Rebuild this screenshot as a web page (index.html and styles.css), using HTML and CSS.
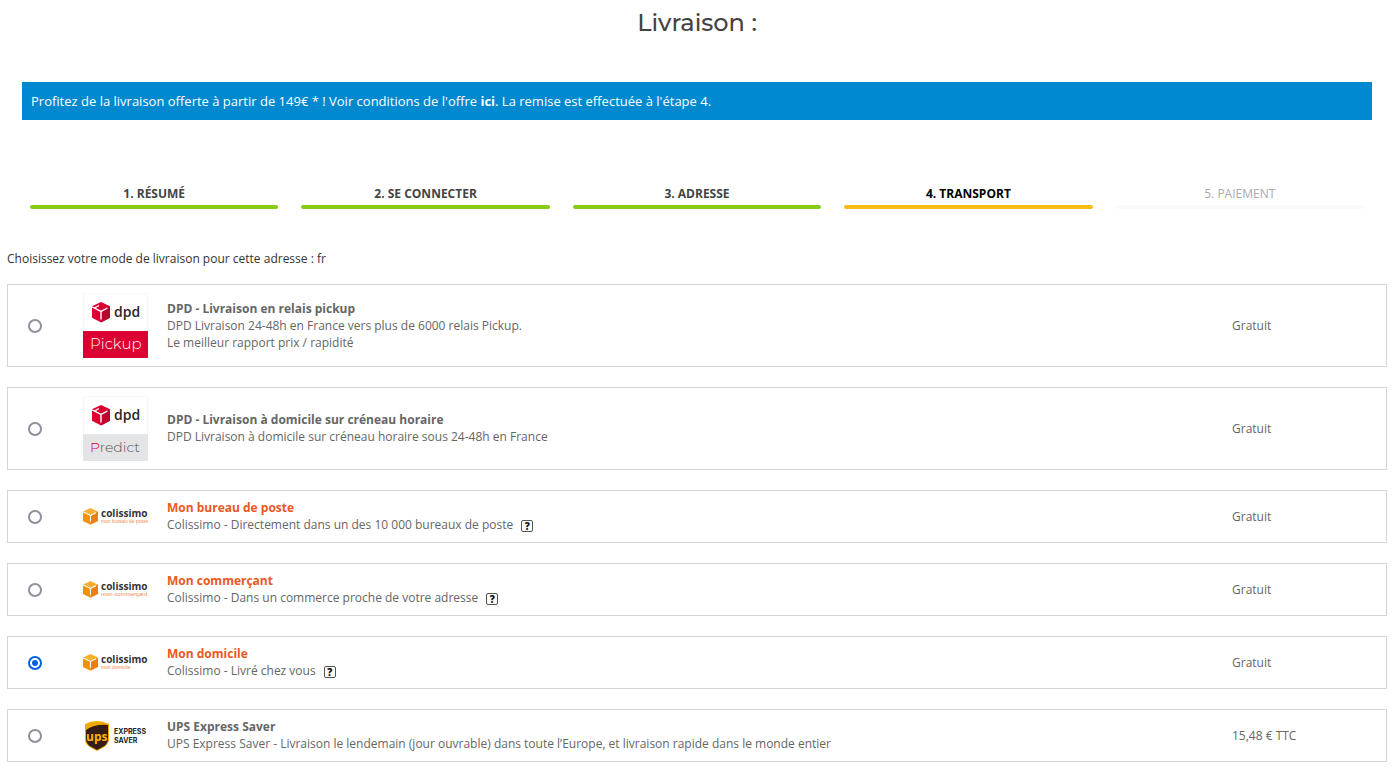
FILE: index.html
```html
<!DOCTYPE html>
<html lang="fr">
<head>
<meta charset="utf-8">
<title>Livraison</title>
<link rel="stylesheet" href="styles.css">
</head>
<body>
<svg class="defs" aria-hidden="true">
  <symbol id="dpd-cube" viewBox="0 0 18 21">
    <path fill="#dc0032" d="M9 0 18 4.200V15.800L9 20.600 0 15.800V4.200z"/>
    <path fill="#b8062c" d="M9.500 9.500 18 5V15.800L9.500 20.300z"/>
    <path fill="none" stroke="#fff" stroke-width="1.400" d="M0 4.800 9 9.400 15.500 6M9 9.400V17.500M2.500 6 7 3.500"/>
  </symbol>
  <symbol id="colissimo-cube" viewBox="0 0 15 17">
    <path fill="#fbb034" d="M7.500 0 15 3.600 7.500 7.200 0 3.600z"/>
    <path fill="#f39200" d="M0 3.600 7.500 7.200V16.800L0 13z"/>
    <path fill="#ee7d11" d="M15 3.600V13L7.500 16.800V7.200z"/>
    <path fill="none" stroke="#fff" stroke-width="1.100" d="M0 3.900 7.500 7.400 13 4.800M7.500 7.400V13.500"/>
  </symbol>
</svg>
<main class="page">
  <h1 class="title">Livraison :</h1>
  <p class="banner">Profitez de la livraison offerte à partir de 149€ * ! Voir conditions de l'offre <a href="#">ici</a>. La remise est effectuée à l'étape 4.</p>
  <ol class="steps">
    <li class="step done">1. Résumé</li>
    <li class="step done">2. Se connecter</li>
    <li class="step done">3. Adresse</li>
    <li class="step current">4. Transport</li>
    <li class="step todo">5. Paiement</li>
  </ol>
  <form class="carriers">
    <p class="intro">Choisissez votre mode de livraison pour cette adresse : fr</p>

    <div class="carrier">
      <input type="radio" name="carrier" id="c1">
      <svg class="logo" width="65" height="65" viewBox="0 0 65 65" aria-hidden="true">
        <rect x=".5" y=".5" width="64" height="64" fill="#fff" stroke="#f8f8f8"/>
        <use href="#dpd-cube" x="9" y="9" width="18" height="21"/>
        <text class="dpd" x="31" y="24">dpd</text>
        <rect y="38" width="65" height="27" fill="#dc0032"/>
        <text class="sub pickup" x="7" y="56">Pickup</text>
      </svg>
      <label class="text" for="c1"><strong>DPD - Livraison en relais pickup</strong><span>DPD Livraison 24-48h en France vers plus de 6000 relais Pickup.</span><span>Le meilleur rapport prix / rapidité</span></label>
      <span class="price">Gratuit</span>
    </div>

    <div class="carrier">
      <input type="radio" name="carrier" id="c2">
      <svg class="logo" width="65" height="65" viewBox="0 0 65 65" aria-hidden="true">
        <rect x=".5" y=".5" width="64" height="64" fill="#fff" stroke="#f8f8f8"/>
        <use href="#dpd-cube" x="9" y="9" width="18" height="21"/>
        <text class="dpd" x="31" y="24">dpd</text>
        <rect y="38" width="65" height="27" fill="#e3e4e6"/>
        <text class="sub predict" x="7" y="56"><tspan fill="#dc0032">P</tspan>redict</text>
      </svg>
      <label class="text" for="c2"><strong>DPD - Livraison à domicile sur créneau horaire</strong><span>DPD Livraison à domicile sur créneau horaire sous 24-48h en France</span></label>
      <span class="price">Gratuit</span>
    </div>

    <div class="carrier">
      <input type="radio" name="carrier" id="c3">
      <svg class="logo" width="65" height="17" viewBox="0 0 65 17" aria-hidden="true">
        <use href="#colissimo-cube" width="15" height="17"/>
        <text class="coli" x="18" y="9">colissimo</text>
        <text class="coli-sub" x="18" y="15">mon bureau de poste</text>
      </svg>
      <div class="text post"><label for="c3"><strong>Mon bureau de poste</strong></label><span class="line">Colissimo - Directement dans un des 10 000 bureaux de poste<button type="button" class="help">?</button></span></div>
      <span class="price">Gratuit</span>
    </div>

    <div class="carrier">
      <input type="radio" name="carrier" id="c4">
      <svg class="logo" width="65" height="17" viewBox="0 0 65 17" aria-hidden="true">
        <use href="#colissimo-cube" width="15" height="17"/>
        <text class="coli" x="18" y="9">colissimo</text>
        <text class="coli-sub wide" x="18" y="15">mon commerçant</text>
      </svg>
      <div class="text post"><label for="c4"><strong>Mon commerçant</strong></label><span class="line">Colissimo - Dans un commerce proche de votre adresse<button type="button" class="help">?</button></span></div>
      <span class="price">Gratuit</span>
    </div>

    <div class="carrier">
      <input type="radio" name="carrier" id="c5" checked>
      <svg class="logo" width="65" height="17" viewBox="0 0 65 17" aria-hidden="true">
        <use href="#colissimo-cube" width="15" height="17"/>
        <text class="coli" x="18" y="9">colissimo</text>
        <text class="coli-sub" x="18" y="15">mon domicile</text>
      </svg>
      <div class="text post"><label for="c5"><strong>Mon domicile</strong></label><span class="line">Colissimo - Livré chez vous<button type="button" class="help">?</button></span></div>
      <span class="price">Gratuit</span>
    </div>

    <div class="carrier">
      <input type="radio" name="carrier" id="c6">
      <svg class="logo" width="65" height="32" viewBox="0 0 65 32" aria-hidden="true">
        <path fill="#f0ab00" d="M2 4Q14-2 26 4V19Q26 24.500 20.500 27.500L14 31 7.500 27.500Q2 24.500 2 19z"/>
        <path fill="#351c15" d="M3 10Q11 4 25 5V19Q25 24 20 26.700L14 29.900 8 26.700Q3 24 3 19z"/>
        <text class="ups" x="3" y="21">ups</text>
        <text class="ups-sub" x="31" y="14">EXPRESS</text>
        <text class="ups-sub" x="31" y="23">SAVER</text>
      </svg>
      <label class="text" for="c6"><strong>UPS Express Saver</strong><span>UPS Express Saver - Livraison le lendemain (jour ouvrable) dans toute l’Europe, et livraison rapide dans le monde entier</span></label>
      <span class="price">15,48 € TTC</span>
    </div>
  </form>
</main>
</body>
</html>
```
FILE: styles.css
```css
* { box-sizing: border-box; }
body {
  margin: 0;
  background: #fff;
  color: #666;
  font: 12px/17px "Open Sans", "Noto Sans", sans-serif;
}
.defs { position: absolute; width: 0; height: 0; }
.page { padding: 7px 8px 8px 7px; }
.title {
  margin: 0;
  color: #444;
  font: 500 24px/32px Montserrat, Inter, sans-serif;
  text-align: center;
}
.banner {
  margin: 43px 15px 0;
  padding: 9px;
  background: #0089cf;
  color: #fff;
  font-size: 13px;
  line-height: 20px;
}
.banner a { color: inherit; font-weight: 700; text-decoration: none; }
.steps {
  display: grid;
  grid-template-columns: repeat(5, 1fr);
  gap: 23px;
  margin: 65px 23px 0;
  padding: 0;
  list-style: none;
}
.step {
  display: grid;
  gap: 3px;
  color: #444;
  font-weight: 700;
  text-align: center;
  text-transform: uppercase;
}
.step::after {
  content: "";
  height: 4px;
  border-radius: 2px;
  background: #86cc15;
}
.step.current { color: #000; }
.step.current::after { background: #f6bd18; }
.step.todo { color: #aaa; font-weight: 400; }
.step.todo::after { background: #fafafa; }
.carriers { display: grid; gap: 20px; margin-top: 41px; }
.intro { margin: 0 0 -3px; color: #333; }
.carrier {
  display: grid;
  grid-template-columns: 55px 65px 1fr 146px;
  align-items: center;
  min-height: 53px;
  padding: 8px 8px 8px 20px;
  border: 1px solid #d6d4d4;
}
.carrier input {
  appearance: none;
  display: grid;
  place-content: center;
  width: 14px;
  height: 14px;
  margin: 0;
  border: 2px solid #8f8f9d;
  border-radius: 50%;
  background: #fff;
}
.carrier input:checked { border-color: #0060df; }
.carrier input:checked::before {
  content: "";
  width: 6px;
  height: 6px;
  border-radius: 50%;
  background: #0060df;
}
.logo { display: block; overflow: visible; }
.text { display: grid; margin-left: 19px; padding-bottom: 1px; }
.text strong { font-weight: 700; }
.post strong { color: #ea5920; }
.line { display: flex; align-items: center; gap: 8px; }
.help {
  width: 12px;
  height: 12px;
  margin-top: 3px;
  padding: 0;
  border: 1px solid #555;
  border-radius: 2px;
  background: #fff;
  color: #111;
  font: 800 10px/10px "Open Sans", sans-serif;
}
.dpd { fill: #2a2626; font: 600 14px "Open Sans", sans-serif; }
.sub { font: 300 15px Montserrat, "Open Sans", sans-serif; }
.pickup { fill: #fff; }
.predict { fill: #555; font-size: 14px; }
.coli { fill: #333; font: 700 10px "Open Sans", sans-serif; }
.coli-sub { fill: #f08a50; font: 400 5px "Liberation Sans", sans-serif; }
.coli-sub.wide { font-size: 6px; }
.ups { fill: #ffb500; font: 700 12px "Open Sans", sans-serif; }
.ups-sub { fill: #222; font: 700 7px Inter, sans-serif; }
```
